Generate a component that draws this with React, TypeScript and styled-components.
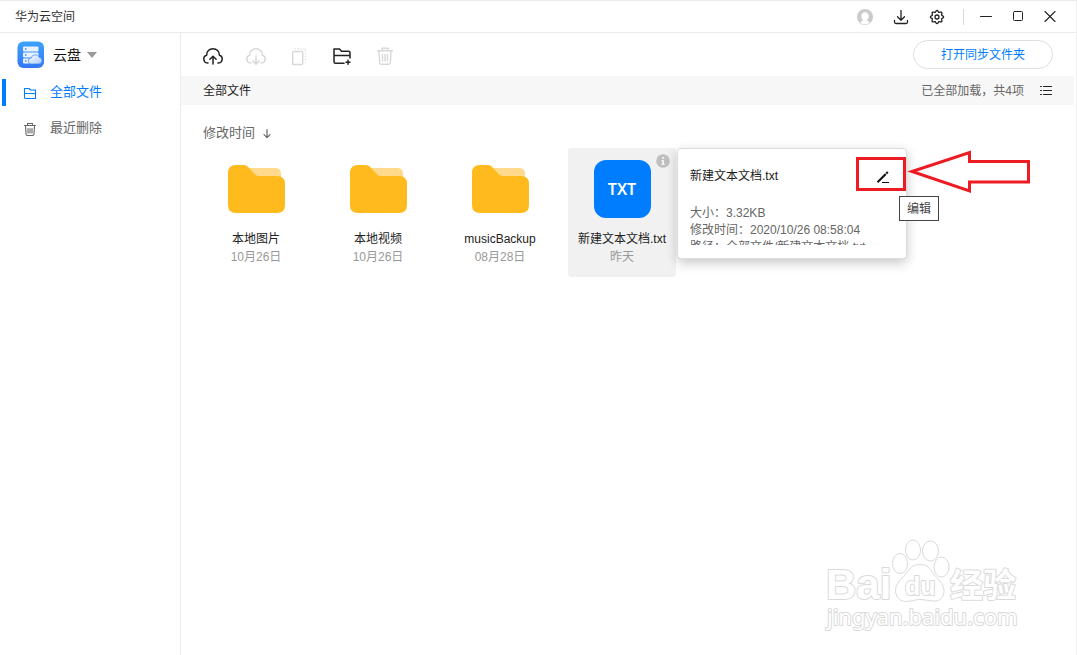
import React from 'react';
import styled, { createGlobalStyle } from 'styled-components';

const GlobalStyle = createGlobalStyle`
  *, *::before, *::after { box-sizing: border-box; }
  body {
    margin: 0;
    background: #fff;
    color: #1a1a1a;
    font-family: "Liberation Sans", "Noto Sans CJK SC", sans-serif;
    font-size: 12px;
    line-height: 18px;
  }
  button {
    font: inherit;
    color: inherit;
    padding: 0;
    border: 0;
    background: none;
  }
  a { color: inherit; text-decoration: none; }
  ul, dl, dd { margin: 0; padding: 0; list-style: none; }
  h1, h2 { margin: 0; font: inherit; }
  svg { display: block; }
`;

const Window = styled.div`
  position: relative;
  display: flex;
  flex-direction: column;
  min-height: 100vh;
  border-top: 1px solid #ebebeb;
  border-right: 1px solid #f0f0f0;
`;

const TitleBar = styled.header`
  display: flex;
  align-items: center;
  height: 32px;
  padding: 0 12px 0 15px;
  border-bottom: 1px solid #ebebeb;
`;

const AppTitle = styled.h1`
  flex: 1;
  color: #333;
`;

const Group = styled.div<{ $gap: number }>`
  display: flex;
  align-items: center;
  gap: ${(p) => p.$gap}px;
`;

const IconButton = styled.button<{ $size: number }>`
  display: grid;
  place-items: center;
  width: ${(p) => p.$size}px;
  height: ${(p) => p.$size}px;
  color: #222;
  &:disabled { color: #d8d8d8; }
`;

const Divider = styled.span`
  width: 1px;
  height: 16px;
  margin: 0 8px 0 12px;
  background: #d9d9d9;
`;

const Body = styled.div`
  display: flex;
  flex: 1;
`;

const Sidebar = styled.aside`
  flex: none;
  width: 181px;
  padding-top: 3px;
  border-right: 1px solid #ebebeb;
`;

const DriveButton = styled.button`
  display: flex;
  align-items: center;
  height: 38px;
  padding-left: 17px;
  font-size: 14px;
  color: #111;
  span { margin: 0 6px 0 8px; }
`;

const NavLink = styled.a<{ $active?: boolean }>`
  display: flex;
  align-items: center;
  height: 36px;
  margin-left: 2px;
  font-size: 13px;
  color: ${(p) => (p.$active ? '#007dff' : '#666')};
  &::before {
    content: '';
    width: 4px;
    height: 27px;
    background: ${(p) => (p.$active ? '#007dff' : 'transparent')};
  }
  svg { margin: 0 12px 0 17px; }
`;

const Main = styled.main`
  flex: 1;
  min-width: 0;
  padding-right: 2px;
`;

const Toolbar = styled.div`
  display: flex;
  align-items: center;
  justify-content: space-between;
  height: 43px;
  padding: 0 21px;
`;

const SyncButton = styled.button`
  width: 140px;
  height: 29px;
  border: 1px solid #dedede;
  border-radius: 15px;
  color: #007dff;
`;

const PathBar = styled.div`
  display: flex;
  align-items: center;
  justify-content: space-between;
  height: 29px;
  padding: 0 20px 0 22px;
  background: #f7f7f7;
`;

const LoadStatus = styled.p`
  margin: 0;
  color: #666;
`;

const SortButton = styled.button`
  display: flex;
  align-items: center;
  gap: 7px;
  height: 31px;
  margin: 12px 0 0 22px;
  font-size: 13px;
  color: #666;
`;

const FileGrid = styled.ul`
  display: flex;
  flex-wrap: wrap;
  gap: 14px;
  padding: 0 21px;
`;

const FileTile = styled.li<{ $hovered?: boolean }>`
  position: relative;
  display: flex;
  flex-direction: column;
  align-items: center;
  width: 108px;
  padding: 12px 0 11px;
  border-radius: 3px;
  background: ${(p) => (p.$hovered ? '#f1f1f1' : 'transparent')};
`;

const FileName = styled.span`
  margin-top: 12px;
  color: #222;
  white-space: nowrap;
`;

const FileDate = styled.span`
  color: #999;
`;

const TextBadge = styled.span`
  display: grid;
  place-items: center;
  width: 57px;
  height: 58px;
  border-radius: 12px;
  background: #007dff;
  color: #fff;
  font: 600 16px/20px "Noto Sans", sans-serif;
`;

const InfoButton = styled.button`
  position: absolute;
  top: 6px;
  right: 6px;
`;

const Popover = styled.section`
  position: absolute;
  z-index: 1;
  top: 0;
  left: 109px;
  width: 230px;
  padding: 15px 11px 13px 12px;
  border: 1px solid #dcdcdc;
  border-radius: 4px;
  background: #fff;
  box-shadow: 0 4px 12px rgba(0, 0, 0, 0.22);
`;

const PopoverHead = styled.div`
  display: flex;
  align-items: center;
  justify-content: space-between;
  height: 24px;
  margin-bottom: 17px;
`;

const Details = styled.dl`
  height: 40px;
  overflow: hidden;
  line-height: 17px;
  color: #666;
  div { display: flex; }
`;

const Callout = styled.svg`
  position: absolute;
  top: 1px;
  left: 178px;
  fill: none;
  stroke: #ed1c24;
  stroke-width: 3;
  pointer-events: none;
`;

const Tooltip = styled.span`
  position: absolute;
  top: 47px;
  left: 221px;
  padding: 4px 7px 3px;
  border: 1px solid #444;
  background: #fff;
  color: #444;
  line-height: 16px;
  white-space: nowrap;
`;

const Watermark = styled.svg`
  position: absolute;
  right: 53px;
  bottom: 18px;
  fill: #fff;
  stroke: #dadada;
  stroke-width: 1;
  text { paint-order: stroke; stroke-width: 2; stroke-linejoin: round; }
`;

type StrokeIconProps = { w: number; h: number; sw?: number; children: React.ReactNode };

const StrokeIcon = ({ w, h, sw = 1.4, children }: StrokeIconProps) => (
  <svg width={w} height={h} viewBox={`0 0 ${w} ${h}`} fill="none" stroke="currentColor"
    strokeWidth={sw} strokeLinecap="round" strokeLinejoin="round" aria-hidden="true">
    {children}
  </svg>
);

const AvatarIcon = () => (
  <svg width="16" height="16" viewBox="0 0 16 16" aria-hidden="true">
    <circle cx="8" cy="8" r="8" fill="#cbcbcb" />
    <path d="M8 3.300A3.700 3.700 0 0 0 4.300 7.200C4.300 8.900 5 10.200 6 10.900C5.900 12 4.200 12.300 3.200 13.500Q5 15.600 8 15.600T12.800 13.500C11.800 12.300 10.100 12 10 10.900C11 10.200 11.700 8.900 11.700 7.200A3.700 3.700 0 0 0 8 3.300z" fill="#fff" />
  </svg>
);

const DownloadIcon = () => (
  <StrokeIcon w={16} h={16} sw={1.3}>
    <path d="M8 1.500v9.500M4.500 7.700 8 11.200l3.500-3.500M1.500 11.500v1.500q0 1.500 1.500 1.500h10q1.500 0 1.500-1.500v-1.500" />
  </StrokeIcon>
);

// Eight rounded teeth around the hub.
const gearOutline = Array.from({ length: 96 }, (_, i) => {
  const angle = (i / 96) * Math.PI * 2;
  const radius = 5.8 + 0.8 * Math.cos(angle * 8);
  return `${(8 + radius * Math.cos(angle)).toFixed(2)},${(8 + radius * Math.sin(angle)).toFixed(2)}`;
}).join(' ');

const GearIcon = () => (
  <StrokeIcon w={16} h={16} sw={1.3}>
    <polygon points={gearOutline} />
    <circle cx="8" cy="8" r="2" />
  </StrokeIcon>
);

const CloudIcon = ({ up }: { up?: boolean }) => (
  <StrokeIcon w={22} h={22} sw={1.5}>
    <path d="M6 19H5.500A4 4 0 0 1 4.600 11.200C4.600 7.500 7.300 4.700 11 4.700S17.400 7.500 17.400 11.200A4 4 0 0 1 16.500 19H16" />
    {up
      ? <path d="M11 20V12.500M7.900 15.300 11 12.200l3.100 3.100" />
      : <path d="M11 12v8M7.900 17 11 20.100 14.100 17" />}
  </StrokeIcon>
);

const CopyIcon = () => (
  <StrokeIcon w={22} h={22} sw={1.4}>
    <rect x="4.700" y="7.500" width="10" height="13" rx="1" />
    <path d="M6.500 4.700h11v13.500" strokeDasharray="1 2" strokeLinecap="butt" />
  </StrokeIcon>
);

const NewFolderIcon = () => (
  <StrokeIcon w={22} h={22} sw={1.5}>
    <path d="M13 19.200H4.500Q3 19.200 3 17.700V5H8.500L10.500 7.300H17.500Q19 7.300 19 8.800V14M3 11.500H19" />
    <path d="M17 16.200v4M15 18.200h4" />
  </StrokeIcon>
);

const TrashIcon = () => (
  <StrokeIcon w={22} h={22} sw={1.4}>
    <path d="M3.500 6.800H18.500M8 6.500V4.200h6V6.500M5 7l.6 11.700q.1 1.500 1.500 1.500h7.800q1.400 0 1.500-1.500L17 7M8.500 10.500v6.500M13.500 10.500v6.500M11 10.500v6.500" />
  </StrokeIcon>
);

const DriveLogo = () => (
  <svg width="28" height="28" viewBox="0 0 28 28" aria-hidden="true">
    <defs>
      <linearGradient id="drive" x1="0" y1="0" x2="0" y2="1">
        <stop offset="0" stopColor="#3ba3fb" />
        <stop offset="1" stopColor="#3576f5" />
      </linearGradient>
      <linearGradient id="cloud" x1="0" y1="0" x2="1" y2="1">
        <stop offset="0" stopColor="#fff" />
        <stop offset="1" stopColor="#a9cbff" />
      </linearGradient>
    </defs>
    <rect x=".5" y=".5" width="26.500" height="26.500" rx="6" fill="url(#drive)" />
    <rect x="6" y="5.500" width="15.500" height="5" rx="1" fill="#e9f3ff" />
    <rect x="6" y="11.500" width="15.500" height="5" rx="1" fill="#e9f3ff" />
    <rect x="6" y="17.500" width="10" height="5" rx="1" fill="#e9f3ff" />
    <path d="M8 7.200h1.500v1.500H8zM8 13.200h1.500v1.500H8zM8 19.200h1.500v1.500H8z" fill="#3b8bf8" />
    <path d="M14.500 23a3 3 0 0 1-.3-6 4.300 4.300 0 0 1 8.100-.7 3.400 3.400 0 0 1-.3 6.700z" fill="url(#cloud)" stroke="#3b85f7" strokeWidth=".7" />
  </svg>
);

const FolderPicture = () => (
  <svg width="57" height="58" viewBox="0 0 57 58" aria-hidden="true">
    <path d="M18 8H47.500Q53 8 53 14V24H25z" fill="#ffd98c" />
    <path d="M8 5H16Q18.500 5 20 6.700L26.500 14Q28 16 30.500 16H49Q57 16 57 24V45Q57 53 49 53H8Q0 53 0 45V13Q0 5 8 5z" fill="#ffba1e" />
  </svg>
);

const folders = [
  { name: '本地图片', date: '10月26日' },
  { name: '本地视频', date: '10月26日' },
  { name: 'musicBackup', date: '08月28日' },
];

const details = [
  ['大小：', '3.32KB'],
  ['修改时间：', '2020/10/26 08:58:04'],
  ['路径：', '全部文件/新建文本文档.txt'],
];

const FileInfo = () => (
  <Popover aria-label="文件信息">
    <PopoverHead>
      <h2>新建文本文档.txt</h2>
      <IconButton $size={24} aria-label="编辑">
        <svg width="16" height="18" viewBox="0 0 16 18" fill="none" stroke="#111" aria-hidden="true">
          <path d="M2.500 15.300 10.800 7" strokeWidth="2" />
          <path d="M11.300 6.500 12.800 5" strokeWidth="2" />
          <path d="M7 15.500h7" strokeWidth="1" />
        </svg>
      </IconButton>
    </PopoverHead>
    <Details>
      {details.map(([label, value]) => (
        <div key={label}><dt>{label}</dt><dd>{value}</dd></div>
      ))}
    </Details>
    <Callout width="176" height="44" viewBox="0 0 176 44" aria-hidden="true">
      <rect x="1.500" y="8.500" width="47" height="31" />
      <path d="M56 21.500 113.500 2.500V11.500H172.500V32H113.500V41z" />
    </Callout>
    <Tooltip role="tooltip">编辑</Tooltip>
  </Popover>
);

const BrandMark = () => (
  <Watermark width="200" height="100" viewBox="0 0 200 100" aria-hidden="true">
    <text x="3" y="62" fontFamily="Liberation Sans" fontWeight="700" fontSize="42">Bai</text>
    <ellipse cx="90" cy="13" rx="7.500" ry="10" />
    <ellipse cx="107.500" cy="14" rx="8" ry="10" />
    <ellipse cx="77" cy="26.500" rx="7.500" ry="10" />
    <ellipse cx="118.500" cy="30" rx="7.500" ry="10" />
    <path d="M97 27.500C104 27.500 107 31 110 36C114 42 121 46 121 54C121 61 116 64.500 110 64C104 63.500 101 62.500 97 62.500S89 64 84 64.500C77 65 72.500 60 72.500 53.500C72.500 46 79 42 84 35C87 31 90 27.500 97 27.500z" />
    <text x="82" y="58" fontFamily="Liberation Sans" fontWeight="700" fontSize="25">du</text>
    <text x="127" y="60" fontFamily="Noto Sans CJK SC" fontWeight="700" fontSize="33">经验</text>
    <text x="4" y="88" fontFamily="Noto Sans" fontSize="22">jingyan.baidu.com</text>
  </Watermark>
);

export default function App() {
  return (
    <>
      <GlobalStyle />
      <Window>
        <TitleBar>
          <AppTitle>华为云空间</AppTitle>
          <Group $gap={8}>
            <IconButton $size={28} aria-label="账号"><AvatarIcon /></IconButton>
            <IconButton $size={28} aria-label="传输列表"><DownloadIcon /></IconButton>
            <IconButton $size={28} aria-label="设置"><GearIcon /></IconButton>
          </Group>
          <Divider />
          <Group $gap={4}>
            <IconButton $size={28} aria-label="最小化">
              <StrokeIcon w={12} h={12} sw={1}><path d="M.5 5.500h11" /></StrokeIcon>
            </IconButton>
            <IconButton $size={28} aria-label="最大化">
              <StrokeIcon w={12} h={12} sw={1}><rect x="1.500" y=".5" width="9" height="9" rx="1" /></StrokeIcon>
            </IconButton>
            <IconButton $size={28} aria-label="关闭">
              <StrokeIcon w={12} h={12} sw={1.1}><path d="M1 .5l10 10M11 .5l-10 10" /></StrokeIcon>
            </IconButton>
          </Group>
        </TitleBar>
        <Body>
          <Sidebar>
            <DriveButton>
              <DriveLogo />
              <span>云盘</span>
              <svg width="10" height="6" viewBox="0 0 10 6" aria-hidden="true">
                <path d="M0 0h10L5 6z" fill="#999" />
              </svg>
            </DriveButton>
            <nav>
              <NavLink href="#files" $active>
                <StrokeIcon w={15} h={16} sw={1.1}>
                  <path d="M1.500 4.500H6L7.500 6H12.500V14.500H2.500Q1.500 14.500 1.500 13.500zM1.500 9.500H12.500" />
                </StrokeIcon>
                全部文件
              </NavLink>
              <NavLink href="#deleted">
                <StrokeIcon w={15} h={16} sw={1.1}>
                  <path d="M1.500 5.500h11M4.500 5V3.500h5V5M2.500 6l.5 8q.1 1.500 1.500 1.500h5q1.400 0 1.500-1.500l.5-8M5 8.500v4.500M7 8.500v4.500M9 8.500v4.500" />
                </StrokeIcon>
                最近删除
              </NavLink>
            </nav>
          </Sidebar>
          <Main>
            <Toolbar>
              <Group $gap={21}>
                <IconButton $size={22} aria-label="上传"><CloudIcon up /></IconButton>
                <IconButton $size={22} aria-label="下载" disabled><CloudIcon /></IconButton>
                <IconButton $size={22} aria-label="复制" disabled><CopyIcon /></IconButton>
                <IconButton $size={22} aria-label="新建文件夹"><NewFolderIcon /></IconButton>
                <IconButton $size={22} aria-label="删除" disabled><TrashIcon /></IconButton>
              </Group>
              <SyncButton>打开同步文件夹</SyncButton>
            </Toolbar>
            <PathBar>
              <a href="#files">全部文件</a>
              <Group $gap={14}>
                <LoadStatus>已全部加载，共4项</LoadStatus>
                <IconButton $size={16} aria-label="列表视图">
                  <StrokeIcon w={12} h={12} sw={1}>
                    <path d="M.5 1.500h1M.5 5.500h1M.5 9.500h1M3.500 1.500h8M3.500 5.500h8M3.500 9.500h8" />
                  </StrokeIcon>
                </IconButton>
              </Group>
            </PathBar>
            <SortButton>
              修改时间
              <StrokeIcon w={10} h={12} sw={1.2}>
                <path d="M5 2.500v8M2 7.700l3 3 3-3" />
              </StrokeIcon>
            </SortButton>
            <FileGrid>
              {folders.map((f) => (
                <FileTile key={f.name}>
                  <FolderPicture />
                  <FileName>{f.name}</FileName>
                  <FileDate>{f.date}</FileDate>
                </FileTile>
              ))}
              <FileTile $hovered>
                <TextBadge>TXT</TextBadge>
                <FileName>新建文本文档.txt</FileName>
                <FileDate>昨天</FileDate>
                <InfoButton aria-label="详细信息">
                  <svg width="14" height="14" viewBox="0 0 14 14" aria-hidden="true">
                    <circle cx="7" cy="7" r="6.800" fill="#bfbfbf" />
                    <path d="M6 3h2v1.700H6zM5.300 6H8v4h.8v1H5.300v-1H6V7h-.7z" fill="#f1f1f1" />
                  </svg>
                </InfoButton>
                <FileInfo />
              </FileTile>
            </FileGrid>
          </Main>
        </Body>
        <BrandMark />
      </Window>
    </>
  );
}
